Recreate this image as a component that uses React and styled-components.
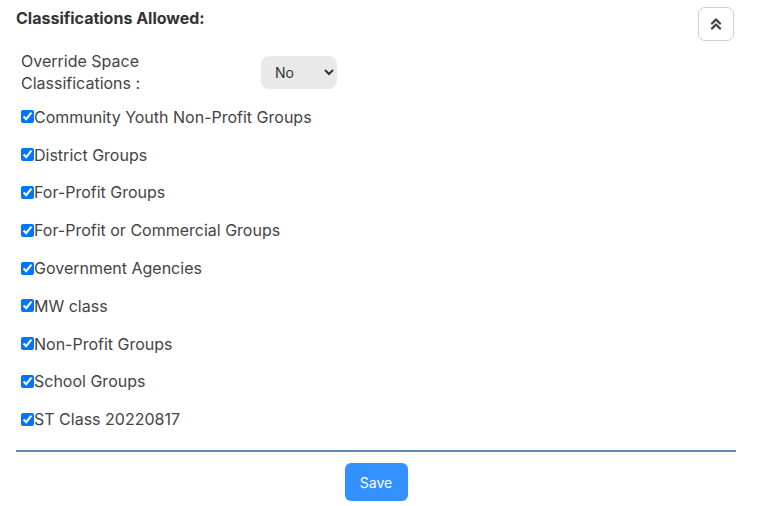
import React, { useState } from 'react';
import styled, { createGlobalStyle } from 'styled-components';

const Global = createGlobalStyle`
  body {
    margin: 0;
    background: #fff;
    font-family: Inter, "Noto Sans", sans-serif;
    color: #3b3b3b;
  }
`;

const Panel = styled.div`
  width: 720px;
  padding: 7px 0 0 16px;
`;

const Header = styled.div`
  display: flex;
  justify-content: space-between;
  align-items: flex-start;
`;

const Title = styled.h3`
  margin: 0;
  padding-top: 1px;
  font-size: 16px;
  font-weight: 700;
  color: #333;
`;

const CollapseButton = styled.button`
  width: 36px;
  height: 34px;
  margin-right: 2px;
  border: 1px solid #d0d0d0;
  border-radius: 7px;
  background: #fff;
  display: flex;
  align-items: center;
  justify-content: center;
  padding: 0;
  color: #444;
`;

const Body = styled.div`
  padding-left: 5px;
`;

const OverrideRow = styled.div`
  display: flex;
  align-items: center;
  margin-top: 9px;
`;

const Label = styled.label`
  width: 140px;
  margin-right: 100px;
  font-size: 16px;
  line-height: 22px;
  color: #444;
`;

const Select = styled.select`
  width: 76px;
  height: 33px;
  border: none;
  border-radius: 8px;
  background: #e9e9e9;
  padding: 0 8px 0 10px;
  font-family: inherit;
  font-size: 14px;
  color: #333;
`;

const List = styled.div`
  display: flex;
  flex-direction: column;
  margin-top: 4px;
`;

const Item = styled.label`
  display: flex;
  align-items: center;
  height: 37.8px;
  font-size: 16px;
  color: #444;
`;

const Check = styled.input`
  margin: 0;
  width: 13px;
  height: 13px;
`;

const Divider = styled.hr`
  margin: 12px 0 0;
  border: none;
  height: 2px;
  background: #5f88b3;
`;

const Footer = styled.div`
  display: flex;
  justify-content: center;
  padding: 11px 0 0;
`;

const SaveButton = styled.button`
  width: 63px;
  height: 38px;
  border: none;
  border-radius: 6px;
  background: #3391ff;
  color: #fff;
  font-family: inherit;
  font-size: 14px;
`;

const classes = [
  'Community Youth Non-Profit Groups',
  'District Groups',
  'For-Profit Groups',
  'For-Profit or Commercial Groups',
  'Government Agencies',
  'MW class',
  'Non-Profit Groups',
  'School Groups',
  'ST Class 20220817',
];

export default function App() {
  const [checked, setChecked] = useState(classes.map(() => true));

  return (
    <Panel>
      <Global />
      <Header>
        <Title>Classifications Allowed:</Title>
        <CollapseButton>
          <svg width="12" height="14" viewBox="0 0 12 14" fill="none" stroke="currentColor" strokeWidth="2.4" strokeLinecap="round" strokeLinejoin="round">
            <path d="M2 6.5 L6 2.5 L10 6.5" />
            <path d="M2 11.5 L6 7.5 L10 11.5" />
          </svg>
        </CollapseButton>
      </Header>
      <Body>
        <OverrideRow>
          <Label>Override Space Classifications :</Label>
          <Select defaultValue="No">
            <option>No</option>
            <option>Yes</option>
          </Select>
        </OverrideRow>
        <List>
          {classes.map((c, i) => (
            <Item key={c}>
              <Check
                type="checkbox"
                checked={checked[i]}
                onChange={() => setChecked(checked.map((v, j) => (j === i ? !v : v)))}
              />
              {c}
            </Item>
          ))}
        </List>
      </Body>
      <Divider />
      <Footer>
        <SaveButton>Save</SaveButton>
      </Footer>
    </Panel>
  );
}
